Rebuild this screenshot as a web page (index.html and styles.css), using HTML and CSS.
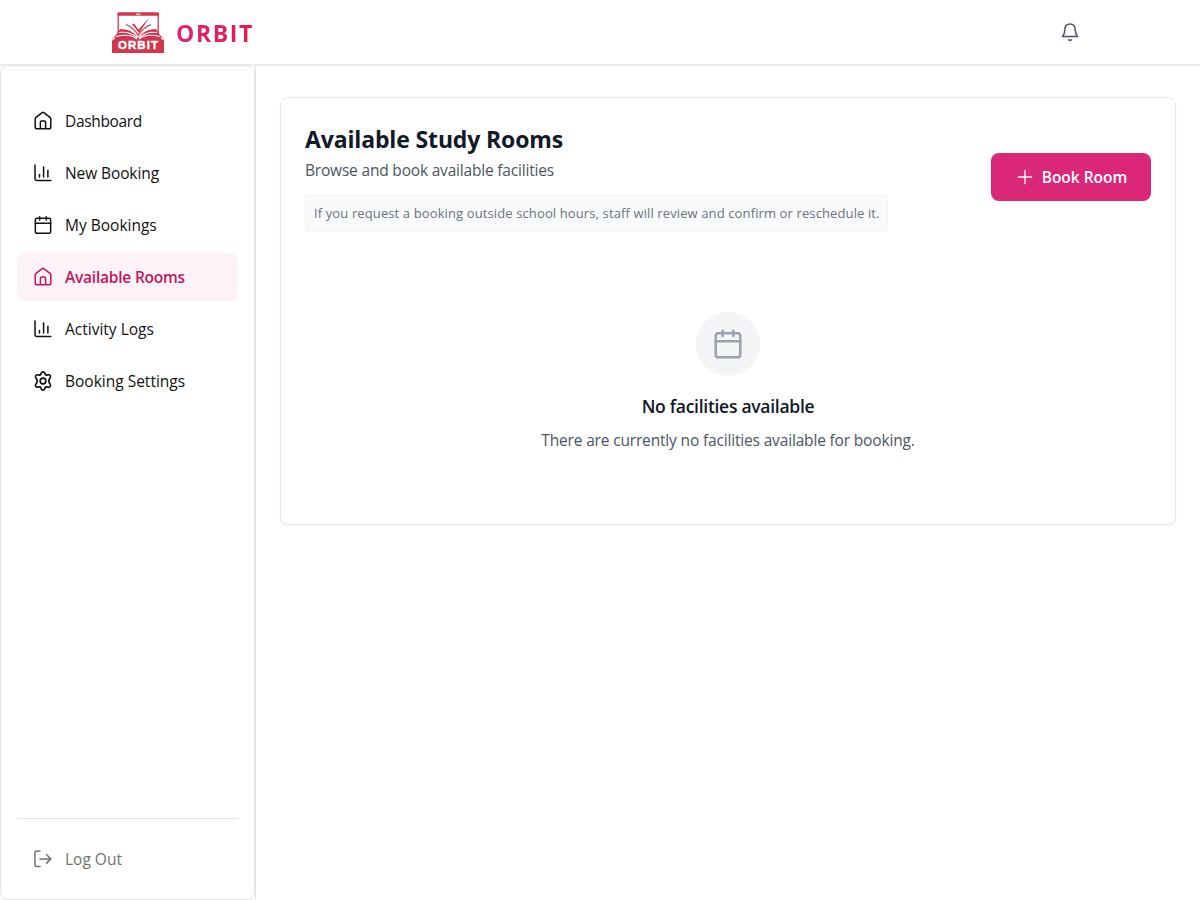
FILE: index.html
```html
<!DOCTYPE html>
<html lang="en">
<head>
<meta charset="utf-8">
<title>ORBIT</title>
<link rel="stylesheet" href="styles.css">
</head>
<body>
<svg class="defs" aria-hidden="true">
  <symbol id="home" viewBox="0 0 20 20"><path d="M2.2 7.9Q2.2 7 3 6.4L9.2 1.6Q10 1 10.8 1.6L17 6.4Q17.8 7 17.8 7.9V16Q17.8 17.8 16 17.8H4Q2.2 17.8 2.2 16ZM7.4 17.5V11Q7.4 9.9 8.5 9.9H11.5Q12.6 9.9 12.6 11V17.5"/></symbol>
  <symbol id="chart" viewBox="0 0 20 20"><path d="M2 2V15.7Q2 17.4 3.7 17.4H17.8M6.5 14V11.5M10.6 14V4M14.9 14V7.3"/></symbol>
  <symbol id="calendar" viewBox="0 0 24 24"><rect x="2.8" y="4" width="18.4" height="18" rx="2"/><path d="M2.8 10H21.2M8 2V6M16 2V6"/></symbol>
  <symbol id="gear" viewBox="1.4 1.4 21.2 21.2"><path d="M10.1 3.7Q10.7 2.4 12 2.4T13.9 3.7L14.3 4.9Q14.9 5.9 16.1 5.7L17.4 5.4Q18.9 5.2 19.6 6.3T19.6 8.7L18.7 9.9Q17.6 12 18.7 14.1L19.6 15.3Q20.3 16.6 19.6 17.7T17.4 18.6L16.1 18.3Q14.9 18.1 14.3 19.1L13.9 20.3Q13.3 21.6 12 21.6T10.1 20.3L9.7 19.1Q9.1 18.1 7.9 18.3L6.6 18.6Q5.1 18.8 4.4 17.7T4.4 15.3L5.3 14.1Q6.4 12 5.3 9.9L4.4 8.7Q3.7 7.4 4.4 6.3T6.6 5.4L7.9 5.7Q9.1 5.9 9.7 4.9Z"/><circle cx="12" cy="12" r="3"/></symbol>
</svg>
<header class="topbar">
  <div class="brand">
    <svg class="logo" viewBox="0 0 52 42">
      <rect x="6.2" y="2.2" width="40" height="26" rx="1.2" fill="#fff" stroke="#d2354c" stroke-width="1.3"/>
      <path d="M5.6 1.6H46.8V4.8H5.6Z" fill="#d2354c"/><path d="M24 3.2h4.500" stroke="#fff"/>
      <path d="M0 28L4 24 8 18Q20 18 26 25Q32 18 44 18L48 24 52 28V42H0Z" fill="#d2354c"/>
      <path d="M4 25.500Q18 22 25 28M7 21.500Q18 20 25.500 27M12 17Q21 19 26 26M26.500 26Q32 19 41 17M27 27Q35 20 45 21.500M27 28Q35 22 48 25.500M.3 29L3 26.500M49 26.500L51.700 29" fill="none" stroke="#fff" stroke-width="1.100"/>
      <path d="M14 13.500Q22 17 26 24Q31 17 39 13.500" fill="none" stroke="#d2354c" stroke-width="1.200"/>
      <path d="M20 13L22 12.500 26.500 18.500 37.500 6.500 27 22Z" fill="#d2354c"/>
      <text class="logo-text" x="26" y="37.700" text-anchor="middle" textLength="40">ORBIT</text>
    </svg>
    <span class="wordmark">ORBIT</span>
  </div>
  <svg class="icon bell" viewBox="0 0 20 20"><path d="M2.5 14.600Q4.800 12 4.800 7.500Q5 2 10 2T15.200 7.500Q15.200 12 17.500 14.600ZM8.600 17.700Q10 19 11.400 17.700"/></svg>
</header>
<div class="shell">
  <aside class="sidebar">
    <div class="panel">
      <nav class="menu">
        <a class="item"><svg class="icon"><use href="#home"/></svg><span class="tight">Dashboard</span></a>
        <a class="item"><svg class="icon"><use href="#chart"/></svg><span class="snug">New Booking</span></a>
        <a class="item"><svg class="icon cal"><use href="#calendar"/></svg><span>My Bookings</span></a>
        <a class="item active"><svg class="icon"><use href="#home"/></svg><span>Available Rooms</span></a>
        <a class="item"><svg class="icon"><use href="#chart"/></svg><span>Activity Logs</span></a>
        <a class="item"><svg class="icon cal"><use href="#gear"/></svg><span>Booking Settings</span></a>
      </nav>
      <div class="bottom">
        <a class="item logout"><svg class="icon" viewBox="0 0 20 20"><path d="M7 2H3.800Q1.900 2 1.900 3.900V15.600Q1.900 17.500 3.800 17.500H7M7 9.900H17.800M13.600 5.700L17.800 9.900 13.600 14.100"/></svg><span>Log Out</span></a>
      </div>
    </div>
  </aside>
  <main class="main">
    <section class="card">
      <div class="head">
        <div class="intro">
          <h1 class="title">Available Study Rooms</h1>
          <p class="subtitle">Browse and book available facilities</p>
          <p class="note">If you request a booking outside school hours, staff will review and confirm or reschedule it.</p>
        </div>
        <button class="book"><svg class="plus" viewBox="0 0 16 16"><path d="M8 1.300V14.700M1.300 8H14.700"/></svg><span>Book Room</span></button>
      </div>
      <div class="empty">
        <div class="disc"><svg class="big"><use href="#calendar"/></svg></div>
        <h2 class="empty-title">No facilities available</h2>
        <p class="empty-text">There are currently no facilities available for booking.</p>
      </div>
    </section>
  </main>
</div>
</body>
</html>
```
FILE: styles.css
```css
* { box-sizing: border-box; }
body { margin: 0; height: 900px; display: flex; flex-direction: column; overflow: hidden; background: #fff; color: #111; font: 15.5px/24px "Open Sans", "Noto Sans", sans-serif; }
h1, h2, p { margin: 0; white-space: nowrap; }
.defs { position: absolute; width: 0; height: 0; }
.topbar { height: 65px; flex: none; display: flex; align-items: center; justify-content: space-between; padding: 0 120px 0 112px; border-bottom: 1px solid #e5e7eb; box-shadow: 0 1px 2px rgba(0,0,0,.06); }
.brand { display: flex; align-items: center; gap: 12px; }
.logo { width: 52px; height: 42px; }
.logo-text { font: 700 11.5px "Liberation Sans", sans-serif; fill: #fff; stroke: #fff; stroke-width: .4; }
.wordmark { padding-top: 2px; font-size: 23px; font-weight: 700; line-height: 32px; letter-spacing: 1.6px; color: transparent; background: linear-gradient(90deg, #db2777, #e11d48); background-clip: text; -webkit-background-clip: text; }
.icon { width: 20px; height: 20px; flex: none; fill: none; stroke: currentColor; stroke-width: 1.5; stroke-linecap: round; stroke-linejoin: round; }
.cal { stroke-width: 1.8; }
.bell { color: #4b5563; }
.shell { flex: 1; display: flex; min-height: 0; }
.sidebar { width: 256px; flex: none; border-right: 1px solid #e5e5e5; }
.panel { height: 100%; border: 1px solid #e5e5e5; border-radius: 8px; padding: 31px 16px 16px; display: flex; flex-direction: column; justify-content: space-between; box-shadow: 0 1px 2px rgba(0,0,0,.05); }
.menu { display: flex; flex-direction: column; gap: 4px; }
.item { display: flex; align-items: center; gap: 12px; height: 48px; padding: 0 16px; border-radius: 8px; white-space: nowrap; }
.tight { letter-spacing: -.33px; }
.snug { letter-spacing: -.1px; }
.active { background: #fdf2f8; color: #be185d; font-weight: 600; letter-spacing: -.22px; }
.bottom { border-top: 1px solid #e5e5e5; padding-top: 16px; }
.logout { color: #737373; }
.main { flex: 1; padding: 32px 24px; }
.card { height: 428px; border: 1px solid #e5e7eb; border-radius: 8px; padding: 24px; box-shadow: 0 1px 2px rgba(0,0,0,.05); }
.head { display: flex; align-items: center; justify-content: space-between; }
.title { font-size: 23px; line-height: 32px; font-weight: 700; letter-spacing: -.14px; color: #111827; padding-top: 1px; }
.subtitle { color: #4b5563; line-height: 24px; margin-top: 3px; letter-spacing: -.19px; }
.note { margin-top: 12px; width: 583px; height: 38px; padding: 0 8px; line-height: 36px; font-size: 13px; letter-spacing: .117px; color: #6b7280; background: #f9fafb; border: 1px solid #f3f4f6; border-radius: 4px; }
.book { width: 160px; height: 48px; display: flex; align-items: center; justify-content: center; gap: 9px; padding: 0 0 0 2px; border: 0; border-radius: 8px; background: #db2777; color: #fff; font: 600 15.5px/24px "Open Sans", "Noto Sans", sans-serif; white-space: nowrap; }
.plus { width: 16px; height: 16px; flex: none; fill: none; stroke: #fff; stroke-width: 1.3; stroke-linecap: round; }
.empty { display: flex; flex-direction: column; align-items: center; padding-top: 80px; }
.disc { width: 64px; height: 64px; display: flex; align-items: center; justify-content: center; border-radius: 50%; background: #f3f4f6; }
.big { width: 32px; height: 32px; fill: none; stroke: #9ca3af; stroke-width: 1.9; stroke-linecap: round; }
.empty-title { margin-top: 16px; font-size: 17.5px; line-height: 28px; font-weight: 600; letter-spacing: -.28px; color: #111827; }
.empty-text { margin-top: 8px; color: #4b5563; letter-spacing: -.165px; }
```
